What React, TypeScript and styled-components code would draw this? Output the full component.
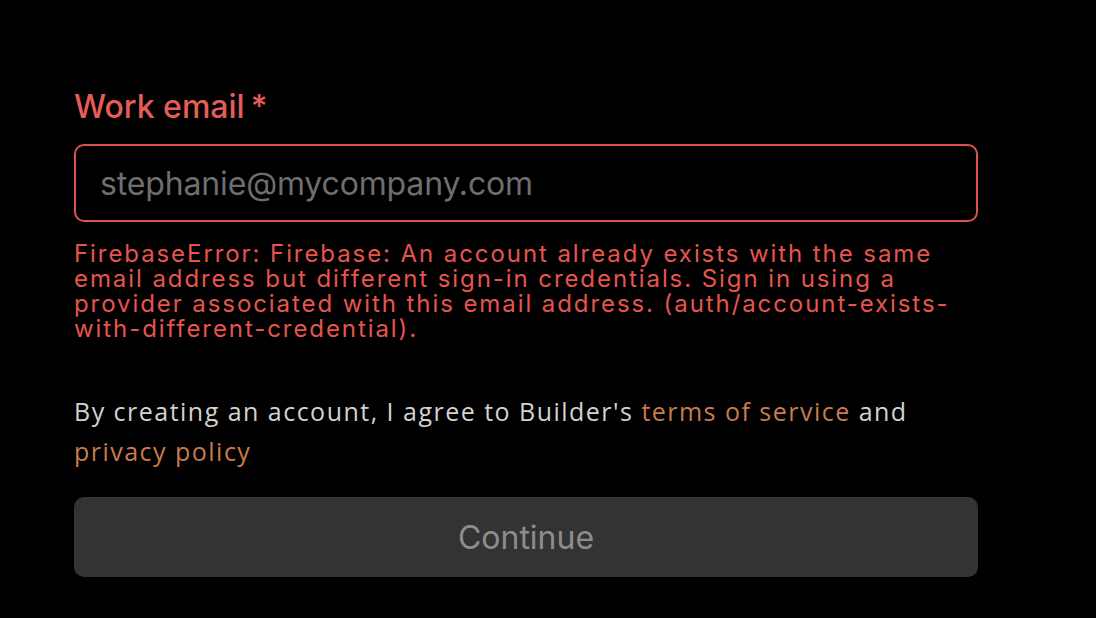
import React from "react";
import styled, { createGlobalStyle } from "styled-components";

const Global = createGlobalStyle`
  html, body { margin: 0; padding: 0; background: #000; }
  body { font-family: Inter, "Liberation Sans", sans-serif; }
`;

const Page = styled.div`
  width: 1096px;
  height: 618px;
  background: #000;
  box-sizing: border-box;
  padding: 87px 0 0 74px;
  overflow: hidden;
`;

const Form = styled.form`
  width: 904px;
  display: flex;
  flex-direction: column;
`;

const Label = styled.label`
  font-family: Inter, sans-serif;
  font-size: 32px;
  font-weight: 500;
  line-height: 40px;
  color: #e45d57;
  margin-bottom: 17px;
`;

const Required = styled.span`
  margin-left: 6px;
`;

const Input = styled.input`
  box-sizing: border-box;
  width: 100%;
  height: 78px;
  border: 2px solid #d9544f;
  border-radius: 10px;
  background: #000;
  padding: 0 24px;
  font-family: Inter, sans-serif;
  font-size: 32px;
  letter-spacing: -0.15px;
  color: #ddd;
  outline: none;
  &::placeholder { color: #6e6e6e; }
`;

const ErrorText = styled.p`
  margin: 19px 0 0;
  font-family: Inter, sans-serif;
  font-size: 24px;
  letter-spacing: 1.92px;
  line-height: 25px;
  color: #e5554e;
`;

const Terms = styled.p`
  margin: 50px 0 0;
  font-family: "Open Sans", sans-serif;
  font-size: 25px;
  letter-spacing: 1.48px;
  line-height: 40px;
  color: #d2d2d2;
`;

const Link = styled.a`
  color: #c97b4c;
  text-decoration: none;
`;

const Button = styled.button`
  margin-top: 26px;
  height: 80px;
  width: 100%;
  border: none;
  border-radius: 10px;
  background: #333333;
  color: #8d8d8d;
  font-family: Inter, sans-serif;
  font-size: 32px;
`;

export default function App() {
  return (
    <Page>
      <Global />
      <Form onSubmit={(e) => e.preventDefault()}>
        <Label>
          Work email<Required>*</Required>
        </Label>
        <Input placeholder="stephanie@mycompany.com" />
        <ErrorText>
          FirebaseError: Firebase: An account already exists with the same email address but
          different sign-in credentials. Sign in using a provider associated with this email
          address. (auth/account-exists-with-different-credential).
        </ErrorText>
        <Terms>
          By creating an account, I agree to Builder's <Link href="#">terms of service</Link> and{" "}
          <Link href="#">privacy policy</Link>
        </Terms>
        <Button type="button" disabled>Continue</Button>
      </Form>
    </Page>
  );
}
